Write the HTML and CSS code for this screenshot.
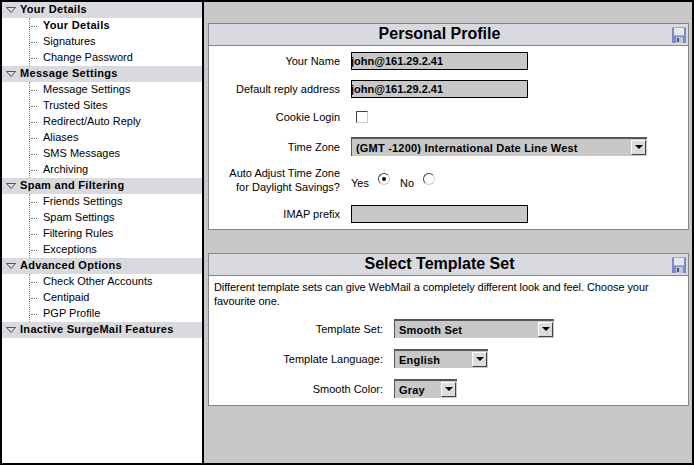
FILE: index.html
```html
<!DOCTYPE html>
<html lang="en">
<head>
  <meta charset="UTF-8">
  <title>Personal Profile</title>
  <link rel="stylesheet" href="styles.css">
</head>
<body>
  <svg class="defs" width="0" height="0">
    <symbol id="tri" viewBox="0 0 10 6">
      <path d="M0.5 0.5H9.5L5 5.5Z" fill="#d9dae8" stroke="#555"/>
    </symbol>
    <symbol id="disk" viewBox="0 0 14 16">
      <rect width="14" height="16" fill="#7c8bc6"/>
      <rect x="2" y="1" width="10" height="7" fill="#e6e8ee"/>
      <rect x="2" y="8" width="10" height="1" fill="#a9b2dc"/>
      <rect x="4" y="10" width="7" height="6" fill="#c4c8d4"/>
      <rect x="5" y="11" width="2" height="4" fill="#46528f"/>
      <rect x="0" y="0" width="14" height="1" fill="#a2accf"/>
    </symbol>
    <symbol id="arrow" viewBox="0 0 8 4">
      <path d="M0 0H8L4 4Z" fill="#000"/>
    </symbol>
  </svg>

  <div class="frame">
    <nav class="sidebar">
      <div class="nav-head"><svg class="tri"><use href="#tri"/></svg>Your Details</div>
      <ul class="nav-list">
        <li class="current">Your Details</li>
        <li>Signatures</li>
        <li>Change Password</li>
      </ul>
      <div class="nav-head"><svg class="tri"><use href="#tri"/></svg>Message Settings</div>
      <ul class="nav-list">
        <li>Message Settings</li>
        <li>Trusted Sites</li>
        <li>Redirect/Auto Reply</li>
        <li>Aliases</li>
        <li>SMS Messages</li>
        <li>Archiving</li>
      </ul>
      <div class="nav-head"><svg class="tri"><use href="#tri"/></svg>Spam and Filtering</div>
      <ul class="nav-list">
        <li>Friends Settings</li>
        <li>Spam Settings</li>
        <li>Filtering Rules</li>
        <li>Exceptions</li>
      </ul>
      <div class="nav-head"><svg class="tri"><use href="#tri"/></svg>Advanced Options</div>
      <ul class="nav-list">
        <li>Check Other Accounts</li>
        <li>Centipaid</li>
        <li>PGP Profile</li>
      </ul>
      <div class="nav-head"><svg class="tri"><use href="#tri"/></svg>Inactive SurgeMail Features</div>
    </nav>

    <main class="content">
      <section class="panel profile">
        <header class="panel-head">
          <h2>Personal Profile</h2>
          <svg class="disk"><use href="#disk"/></svg>
        </header>
        <div class="rows">
          <div class="row">
            <label class="row-label">Your Name</label>
            <div class="text-box">john@161.29.2.41</div>
          </div>
          <div class="row">
            <label class="row-label">Default reply address</label>
            <div class="text-box">john@161.29.2.41</div>
          </div>
          <div class="row">
            <label class="row-label">Cookie Login</label>
            <span class="check"></span>
          </div>
          <div class="row row-tz">
            <label class="row-label">Time Zone</label>
            <div class="select tz">
              <span class="select-text">(GMT -1200) International Date Line West</span>
              <span class="select-btn"><svg class="arrow"><use href="#arrow"/></svg></span>
            </div>
          </div>
          <div class="row row-radio">
            <label class="row-label">Auto Adjust Time Zone<br>for Daylight Savings?</label>
            <div class="radios">
              <span>Yes</span><span class="radio on"></span>
              <span class="no">No</span><span class="radio"></span>
            </div>
          </div>
          <div class="row">
            <label class="row-label">IMAP prefix</label>
            <div class="text-box"></div>
          </div>
        </div>
      </section>

      <section class="panel template">
        <header class="panel-head">
          <h2>Select Template Set</h2>
          <svg class="disk"><use href="#disk"/></svg>
        </header>
        <p class="intro">Different template sets can give WebMail a completely different look and feel. Choose your favourite one.</p>
        <div class="tpl-rows">
          <div class="tpl-row">
            <label class="tpl-label">Template Set:</label>
            <div class="select set">
              <span class="select-text">Smooth Set</span>
              <span class="select-btn"><svg class="arrow"><use href="#arrow"/></svg></span>
            </div>
          </div>
          <div class="tpl-row">
            <label class="tpl-label">Template Language:</label>
            <div class="select lang">
              <span class="select-text">English</span>
              <span class="select-btn"><svg class="arrow"><use href="#arrow"/></svg></span>
            </div>
          </div>
          <div class="tpl-row">
            <label class="tpl-label">Smooth Color:</label>
            <div class="select color">
              <span class="select-text">Gray</span>
              <span class="select-btn"><svg class="arrow"><use href="#arrow"/></svg></span>
            </div>
          </div>
        </div>
      </section>
    </main>
  </div>
</body>
</html>
```

FILE: styles.css
```css
html, body {
  margin: 0;
  padding: 0;
}

body {
  width: 694px;
  height: 465px;
  overflow: hidden;
  font-family: "Liberation Sans", Arial, sans-serif;
  font-size: 11px;
  color: #000;
}

.defs {
  display: block;
}

.frame {
  display: flex;
  box-sizing: border-box;
  width: 694px;
  height: 465px;
  border: 2px solid #000;
  background: #000;
}

/* left tree */
.sidebar {
  width: 200px;
  background: #fff;
  flex: none;
}

.nav-head {
  display: flex;
  align-items: center;
  box-sizing: border-box;
  height: 16px;
  padding-bottom: 2px;
  background: #d9dadf;
  font-weight: bold;
  letter-spacing: 0.3px;
}

.tri {
  width: 10px;
  height: 6px;
  margin: 2px 4px 0 4px;
}

.nav-list {
  list-style: none;
  margin: 0 0 0 27px;
  padding: 0;
  border-left: 1px dotted #777;
}

.nav-list li {
  position: relative;
  height: 16px;
  line-height: 14px;
  padding-left: 13px;
}

.nav-list li::before {
  content: "";
  position: absolute;
  left: 1px;
  top: 8px;
  width: 6px;
  border-top: 1px dotted #777;
}

.nav-list .current {
  font-weight: bold;
  letter-spacing: 0.3px;
}

/* right side */
.content {
  flex: 1;
  margin-left: 2px;
  background: #c8c8c8;
  padding: 21px 3px 0 4px;
}

.panel {
  background: #fff;
  border: 1px solid #84868c;
  width: 481px;
  box-sizing: border-box;
}

.profile {
  height: 207px;
  margin-bottom: 23px;
}

.template {
  height: 153px;
}

.panel-head {
  position: relative;
  box-sizing: border-box;
  height: 22px;
  padding-right: 18px;
  background: #d9dadf;
  border-bottom: 1px solid #84868c;
  text-align: center;
}

.panel-head h2 {
  margin: 0;
  font-size: 16px;
  line-height: 20px;
  font-weight: bold;
}

.disk {
  position: absolute;
  right: 2px;
  top: 3px;
  width: 14px;
  height: 16px;
}

.rows {
  padding-top: 6px;
}

.row {
  display: flex;
  align-items: center;
  height: 18px;
  margin-bottom: 10px;
}

.row-label {
  width: 131px;
  text-align: right;
  margin-right: 11px;
  flex: none;
}

.row-tz {
  height: 19px;
  margin-top: 11px;
  margin-bottom: 9px;
}

.row-radio {
  height: 30px;
  line-height: 14px;
}

.text-box {
  box-sizing: border-box;
  width: 177px;
  height: 18px;
  border: 1px solid #000;
  background: #c8c8c8;
  font-weight: bold;
  line-height: 16px;
  text-indent: -1px;
  overflow: hidden;
}

.check {
  display: block;
  box-sizing: border-box;
  width: 12px;
  height: 12px;
  margin-left: 5px;
  border: 1px solid;
  border-color: #444 #ccc #ccc #444;
}

.radios {
  display: flex;
  align-items: center;
  padding-top: 6px;
}

.no {
  margin-left: 10px;
}

.radio {
  position: relative;
  display: block;
  box-sizing: border-box;
  width: 12px;
  height: 12px;
  margin: -8px 0 0 9px;
  border: 1px solid;
  border-color: #444 #ccc #ccc #444;
  border-radius: 50%;
  background: #fff;
}

.radio.on::after {
  content: "";
  position: absolute;
  left: 3px;
  top: 3px;
  width: 4px;
  height: 4px;
  border-radius: 50%;
  background: #000;
}

/* fake dropdown, looks like the old java widget */
.select {
  display: flex;
  align-items: center;
  justify-content: space-between;
  box-sizing: border-box;
  height: 19px;
  background: #c8c8c8;
  border-top: 2px solid #55575c;
  border-left: 1px solid #55575c;
  font-weight: bold;
  letter-spacing: 0.2px;
}

.select-text {
  padding-left: 4px;
}

.select-btn {
  display: flex;
  align-items: center;
  justify-content: center;
  box-sizing: border-box;
  width: 15px;
  height: 15px;
  margin: 0 1px 1px 0;
  background: #dcdcdc;
  border: 1px solid;
  border-color: #fff #444 #444 #fff;
}

.arrow {
  width: 8px;
  height: 4px;
}

.tz {
  width: 296px;
}

.set {
  width: 160px;
}

.lang {
  width: 94px;
}

.color {
  width: 63px;
}

.intro {
  margin: 4px 5px 0 5px;
  line-height: 14px;
  letter-spacing: -0.07px;
}

.tpl-rows {
  margin-top: 11px;
}

.tpl-row {
  display: flex;
  align-items: center;
  margin-bottom: 11px;
}

.tpl-label {
  width: 174px;
  text-align: right;
  margin-right: 11px;
  flex: none;
}
```
